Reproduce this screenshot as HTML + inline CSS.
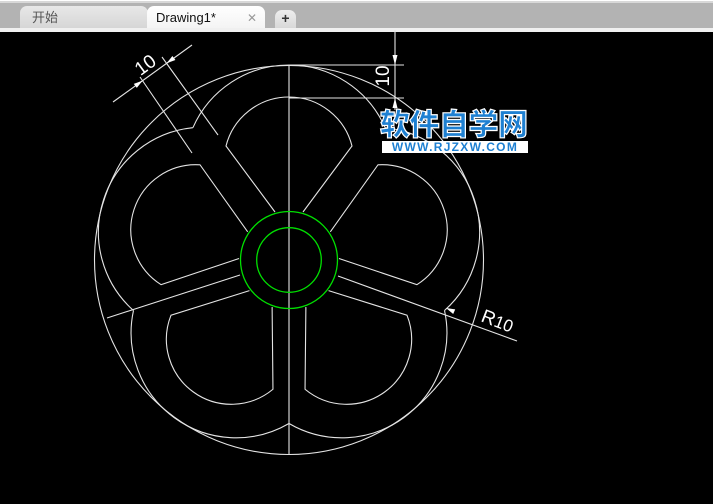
<!DOCTYPE html>
<html><head><meta charset="utf-8"><style>
html,body{margin:0;padding:0;width:713px;height:504px;overflow:hidden;background:#000;}
.bar{position:absolute;left:0;top:0;width:713px;height:32px;background:#b3b3b3;}
.bar .t1{position:absolute;left:0;top:0;width:713px;height:1px;background:#fff;}
.bar .t2{position:absolute;left:0;top:1px;width:713px;height:2px;background:#d8d8d8;}
.bar .b{position:absolute;left:0;top:28px;width:713px;height:4px;background:#f0f0f0;}
.tab{position:absolute;top:6px;height:22px;border-radius:7px 7px 0 0;font-family:"Liberation Sans","Noto Sans CJK SC",sans-serif;font-size:13px;line-height:24px;}
.tab.a{left:20px;width:128px;background:linear-gradient(#e8e8e8,#d6d6d6);color:#555;}
.tab.b2{left:147px;width:118px;background:linear-gradient(#fff,#f4f4f4);color:#111;}
.tab.c{left:275px;width:21px;height:18px;top:10px;background:linear-gradient(#eee,#d8d8d8);color:#333;font-weight:bold;text-align:center;line-height:17px;font-size:14px;}
svg{position:absolute;left:0;top:0;}
.wm{position:absolute;left:380px;top:105px;font-family:"Noto Sans CJK SC",sans-serif;font-weight:900;font-size:30px;color:#1e80d2;letter-spacing:-0.5px;-webkit-text-stroke:1.2px #fff;line-height:34px;}
.wm2{position:absolute;left:382px;top:141px;width:146px;height:12px;background:#fff;color:#1e80d2;font-family:"Liberation Sans",sans-serif;font-weight:bold;font-size:12px;line-height:12px;text-align:center;letter-spacing:1.3px;}
</style></head><body>
<div class="bar"><div class="t1"></div><div class="t2"></div><div class="b"></div>
<div class="tab a"><span style="padding-left:12px">开始</span></div>
<div class="tab b2"><span style="padding-left:9px">Drawing1*</span><span style="position:absolute;left:100px;color:#999;font-size:12px">✕</span></div>
<div class="tab c">+</div>
</div>
<svg width="713" height="504" viewBox="0 0 713 504">
<g fill="none" stroke="#e4e4e4" stroke-width="1.1">
<circle cx="289" cy="260" r="194.5"/>
<g id="unit">
<path d="M275 212 L226 146 A65 65 0 0 1 352 146 L303 212"/>
<path d="M192.9 127.7 A105 105 0 0 1 385.1 127.7"/>
</g>
<use href="#unit" transform="rotate(72 289 260)"/>
<use href="#unit" transform="rotate(144 289 260)"/>
<use href="#unit" transform="rotate(-72 289 260)"/>
<use href="#unit" transform="rotate(-144 289 260)"/>
<line x1="289" y1="66" x2="289" y2="454"/>
<line x1="107" y1="318" x2="240" y2="275"/>
<line x1="338" y1="276" x2="517" y2="341"/>
<line x1="113" y1="102" x2="192" y2="45"/>
<line x1="192" y1="153" x2="140" y2="77"/>
<line x1="218" y1="135" x2="162" y2="57"/>
<line x1="395" y1="30" x2="395" y2="110"/>
<line x1="289" y1="65" x2="404" y2="65"/>
<line x1="289" y1="98" x2="404" y2="98"/>
</g>
<g fill="#fff">
<polygon points="142.6,80.6 136.8,87.9 133.8,83.9"/>
<polygon points="166.6,63.3 175.4,60 172.4,56"/>
<polygon points="395,65 392.5,55 397.5,55"/>
<polygon points="395,98 392.5,108 397.5,108"/>
<polygon points="446,308 455.2,309.4 453.2,314"/>
</g>
<g fill="#fff" font-family="Liberation Sans, sans-serif" font-size="19">
<text x="0" y="0" text-anchor="middle" transform="translate(149,70) rotate(-36)">10</text>
<text x="0" y="0" text-anchor="middle" transform="translate(389,76) rotate(-90)">10</text>
<text x="0" y="0" transform="translate(480,321) rotate(21)">R<tspan font-size="17">10</tspan></text>
</g>
<g fill="none" stroke="#00e000" stroke-width="1.3">
<circle cx="289" cy="260" r="48.5"/>
<circle cx="289" cy="260" r="32.3"/>
</g>
</svg>
<div class="wm">软件自学网</div>
<div class="wm2">WWW.RJZXW.COM</div>
</body></html>
